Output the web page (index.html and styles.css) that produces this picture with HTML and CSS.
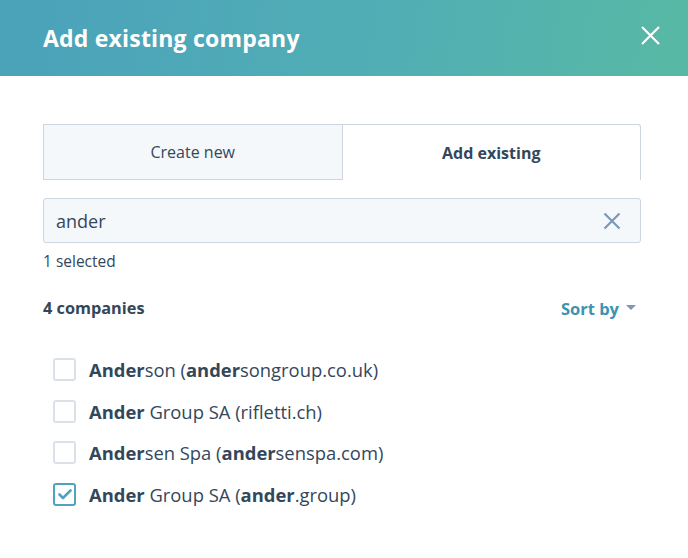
FILE: index.html
```html
<!DOCTYPE html>
<html>
<head>
<meta charset="utf-8">
<link rel="stylesheet" href="styles.css">
</head>
<body>
<div class="dialog">
  <header class="header">
    <h1 class="title">Add existing company</h1>
    <button class="close" aria-label="Close">
      <svg width="19" height="19" viewBox="0 0 19 19"><path d="M1 1L18 18M18 1L1 18" stroke="#fff" stroke-width="2.2" fill="none"/></svg>
    </button>
  </header>
  <main class="body">
    <div class="tabs">
      <div class="tab">Create new</div>
      <div class="tab active">Add existing</div>
    </div>
    <div class="search">
      <span class="query">ander</span>
      <svg class="clear" width="18" height="18" viewBox="0 0 18 18"><path d="M1.5 1.5L16.5 16.5M16.5 1.5L1.5 16.5" stroke="#7c98b6" stroke-width="2.2" fill="none"/></svg>
    </div>
    <div class="selected">1 selected</div>
    <div class="listhead">
      <span class="count">4 companies</span>
      <span class="sort">Sort by <svg width="10" height="6" viewBox="0 0 10 6"><path d="M0 0H10L5 5Z" fill="#7c98b6"/></svg></span>
    </div>
    <ul class="list">
      <li class="row"><span class="cb"></span><span class="name"><b>Ander</b>son (<b>ander</b>songroup.co.uk)</span></li>
      <li class="row"><span class="cb"></span><span class="name"><b>Ander</b> Group SA (rifletti.ch)</span></li>
      <li class="row"><span class="cb"></span><span class="name"><b>Ander</b>sen Spa (<b>ander</b>senspa.com)</span></li>
      <li class="row"><span class="cb checked"><svg width="14" height="11" viewBox="0 0 14 11"><path d="M1.5 5.5L5 9L12.5 1.5" stroke="#4fa3bd" stroke-width="2.6" fill="none" stroke-linecap="round" stroke-linejoin="round"/></svg></span><span class="name"><b>Ander</b> Group SA (<b>ander</b>.group)</span></li>
    </ul>
  </main>
</div>
</body>
</html>
```
FILE: styles.css
```css
* { box-sizing: border-box; }
html, body { margin: 0; padding: 0; background: #fff; }
body { font-family: "Open Sans", "Liberation Sans", sans-serif; color: #33475b; width: 688px; height: 558px; overflow: hidden; }
.dialog { width: 688px; }
.header {
  height: 76px;
  background: linear-gradient(100deg, #4aa2ba 0%, #51aeb5 55%, #57b9a4 100%);
  display: flex; align-items: center; justify-content: space-between;
  padding: 0 28px 0 43px;
}
.title { margin: 0; color: #fff; font-size: 23px; font-weight: 700; letter-spacing: 0.2px; padding-bottom: 0; }
.close { background: none; border: 0; padding: 0; width: 19px; height: 19px; display: flex; margin-top: -6px; }
.body { padding: 48px 47px 0 43px; }
.tabs { display: flex; height: 56px; }
.tab { flex: 1; display: flex; align-items: center; justify-content: center; font-size: 16px; color: #33475b; }
.tab:first-child { background: #f5f8fa; border: 1px solid #cbd6e2; }
.tab.active { background: #fff; border: 1px solid #cbd6e2; border-left: 0; border-bottom: 0; font-weight: 700; border-radius: 0 3px 0 0; }
.search {
  margin-top: 18px; height: 45px; background: #f5f8fa; border: 1px solid #cbd6e2; border-radius: 3px;
  display: flex; align-items: center; justify-content: space-between; padding: 0 19px 0 12px;
}
.query { font-size: 18px; color: #33475b; }
.selected { margin-top: 7px; font-size: 15.5px; height: 22px; line-height: 22px; }
.listhead { margin-top: 24px; display: flex; justify-content: space-between; align-items: center; height: 24px; }
.count { font-size: 16.3px; font-weight: 700; }
.sort { font-size: 16.5px; font-weight: 700; color: #3d93b0; display: flex; align-items: center; gap: 7px; padding-right: 5px; }
.list { list-style: none; margin: 29px 0 0; padding: 0 0 0 10px; }
.row { display: flex; align-items: center; height: 41.5px; }
.cb { width: 23px; height: 23px; border: 2px solid #dbe1ea; border-radius: 3px; margin-right: 13px; display: flex; align-items: center; justify-content: center; background: #fff; }
.cb.checked { border-color: #4fa3bd; }
.name { font-size: 18.4px; color: #33475b; }
.name b { font-weight: 700; }
```
